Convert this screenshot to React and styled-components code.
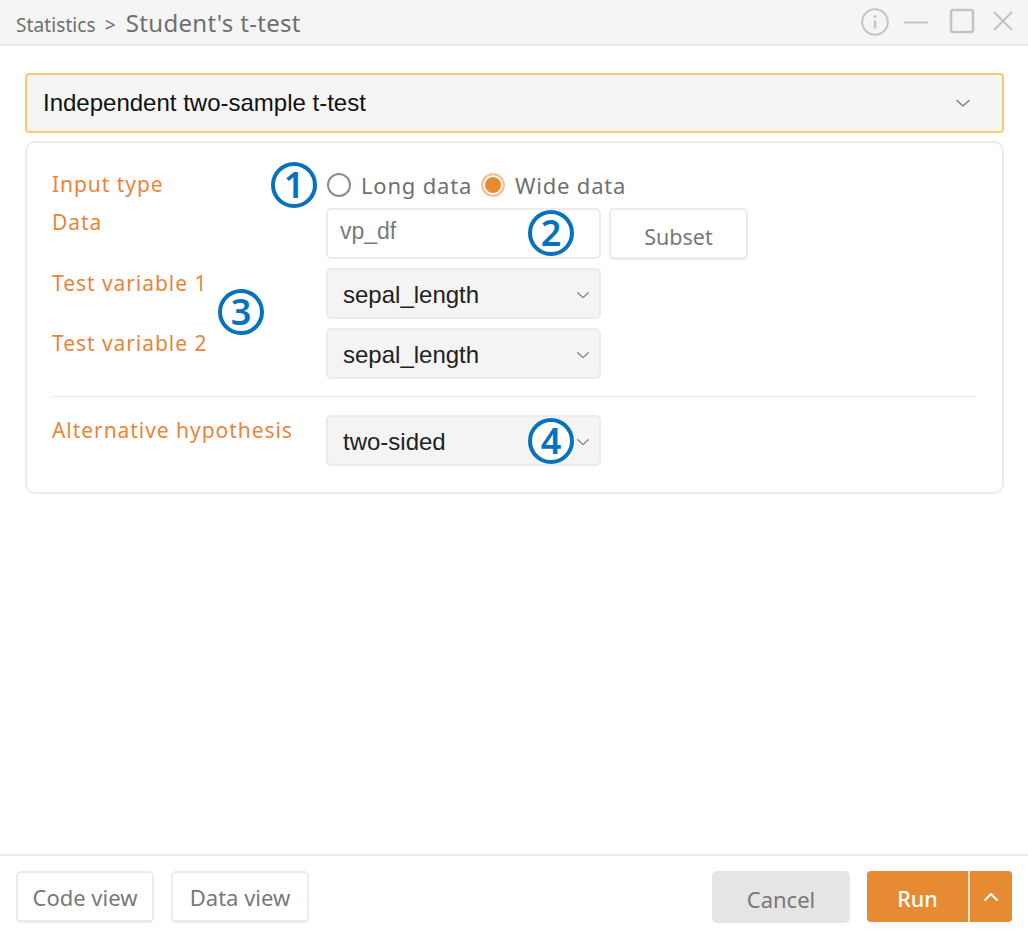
import React from 'react';
import styled, { createGlobalStyle } from 'styled-components';

const GlobalStyle = createGlobalStyle`
  html, body {
    margin: 0;
    padding: 0;
    background: #fff;
  }
  * {
    box-sizing: border-box;
  }
`;

const Window = styled.div`
  width: 1028px;
  height: 933px;
  display: flex;
  flex-direction: column;
  font-family: "Noto Sans", "Open Sans", sans-serif;
`;

const Header = styled.div`
  height: 46px;
  flex: none;
  display: flex;
  align-items: center;
  justify-content: space-between;
  padding: 0 14px 0 16px;
  background: #f5f5f5;
  border-bottom: 2px solid #e8e8e8;
`;

const Breadcrumb = styled.div`
  display: flex;
  align-items: baseline;
  color: #6f6f6f;
`;

const Crumb = styled.span`
  font-size: 19px;
  margin-right: 10px;
  letter-spacing: 0.1px;
  word-spacing: 4px;
`;

const Title = styled.span`
  font-size: 24px;
  letter-spacing: 0.3px;
`;

const WindowControls = styled.div`
  display: flex;
  align-items: center;
  color: #c4c4c4;
`;

const Main = styled.div`
  flex: 1;
  padding: 27px 24px 0 25px;
`;

const TestSelect = styled.div`
  height: 60px;
  display: flex;
  align-items: center;
  justify-content: space-between;
  padding: 0 31px 0 16px;
  background: #f5f5f5;
  border: 2px solid #f8ca74;
  border-radius: 4px;
  font-family: "Liberation Sans", Arial, sans-serif;
  font-size: 24px;
  color: #111;
`;

const Panel = styled.div`
  position: relative;
  height: 353px;
  margin-top: 8px;
  padding: 27px 26px 0 25px;
  border: 2px solid #ececec;
  border-radius: 10px;
`;

const Row = styled.div`
  display: grid;
  grid-template-columns: 274px 1fr;
  height: ${(p) => p.$height || 50}px;
  margin-bottom: ${(p) => p.$gap ?? 10}px;
`;

const Label = styled.div`
  color: #e8853a;
  font-size: 21px;
  line-height: 28px;
  letter-spacing: 0.95px;
  margin-top: ${(p) => p.$top ?? 0}px;
`;

const Controls = styled.div`
  display: flex;
  align-items: ${(p) => p.$align || 'stretch'};
`;

const RadioOption = styled.div`
  display: flex;
  align-items: center;
  color: #707070;
  font-size: 22px;
  letter-spacing: 0.8px;
  margin-right: 8px;
`;

const RadioDot = styled.span`
  width: 24px;
  height: 24px;
  margin: 0 10px 0 1px;
  border-radius: 50%;
  border: 2px solid ${(p) => (p.$checked ? '#f5c49c' : '#8c8c8c')};
  background: ${(p) => (p.$checked ? '#e68a33' : '#fff')};
  box-shadow: ${(p) => (p.$checked ? 'inset 0 0 0 2px #fff' : 'none')};
`;

const TextField = styled.div`
  width: 275px;
  height: 51px;
  display: flex;
  align-items: center;
  padding: 0 0 4px 12px;
  border: 2px solid #ececec;
  border-radius: 5px;
  color: #7a7a7a;
  font-family: "Liberation Sans", Arial, sans-serif;
  font-size: 23px;
`;

const SubsetButton = styled.div`
  width: 139px;
  height: 52px;
  margin-left: 8px;
  display: flex;
  align-items: center;
  justify-content: center;
  padding-top: 6px;
  border: 2px solid #ececec;
  border-bottom-width: 3px;
  border-radius: 5px;
  color: #787878;
  font-size: 21.5px;
`;

const SelectBox = styled.div`
  width: 275px;
  height: 51px;
  display: flex;
  align-items: center;
  justify-content: space-between;
  padding: 2px 9px 0 15px;
  background: #f4f4f4;
  border: 2px solid #ebebeb;
  border-radius: 5px;
  color: #222;
  font-family: "Liberation Sans", Arial, sans-serif;
  font-size: 24px;
`;

const Divider = styled.div`
  height: 1px;
  background: #e8e8e8;
  margin: 0 0 18px 0;
`;

const Callout = styled.span`
  position: absolute;
  left: ${(p) => p.$x}px;
  top: ${(p) => p.$y}px;
  width: 46px;
  height: 46px;
  display: flex;
  align-items: center;
  justify-content: center;
  padding-bottom: 1px;
  background: #fff;
  border: 4.5px solid #0672bf;
  border-radius: 50%;
  color: #0672bf;
  font-family: "Noto Sans", sans-serif;
  font-size: 36px;
  font-weight: 600;
  line-height: 1;
`;

const Footer = styled.div`
  height: 79px;
  flex: none;
  display: flex;
  justify-content: space-between;
  padding: 15px 16px 0 16px;
  border-top: 2px solid #ececec;
`;

const ButtonGroup = styled.div`
  display: flex;
  gap: ${(p) => p.$gap || 0}px;
`;

const ViewButton = styled.div`
  width: ${(p) => p.$width}px;
  height: 52px;
  display: flex;
  align-items: center;
  justify-content: center;
  border: 2px solid #ececec;
  border-bottom-width: 3px;
  border-radius: 5px;
  color: #787878;
  font-size: 22px;
`;

const CancelButton = styled.div`
  width: 138px;
  height: 52px;
  display: flex;
  align-items: center;
  justify-content: center;
  padding-top: 3px;
  background: #e5e5e5;
  border-radius: 5px;
  color: #787878;
  font-size: 22px;
`;

const RunButton = styled.div`
  width: 145px;
  height: 51px;
  display: flex;
  color: #fff;
  background: #e68a33;
  border-radius: 4px;
  overflow: hidden;
`;

const RunLabel = styled.div`
  width: 103px;
  display: flex;
  align-items: center;
  justify-content: center;
  padding-top: 3px;
  font-size: 21.5px;
  font-weight: 500;
  border-right: 2px solid #fbe9d8;
`;

const RunMore = styled.div`
  flex: 1;
  display: flex;
  align-items: center;
  justify-content: center;
`;

const Chevron = ({ size = 16, width = 1.5, color = '#808080', up = false }) => (
  <svg width={size} height={size} viewBox="0 0 16 16" fill="none">
    <path
      d={up ? 'M2 11 L8 5 L14 11' : 'M2 5.5 L8 11 L14 5.5'}
      stroke={color}
      strokeWidth={width}
      strokeLinecap="round"
      strokeLinejoin="round"
    />
  </svg>
);

const InfoIcon = () => (
  <svg width="30" height="30" viewBox="0 0 30 30" fill="none">
    <circle cx="15" cy="15" r="12.8" stroke="#c4c4c4" strokeWidth="2" />
    <circle cx="15" cy="9.5" r="1.5" fill="#c4c4c4" />
    <path d="M15 13.5 V21.5" stroke="#c4c4c4" strokeWidth="2.4" />
  </svg>
);

const MinimizeIcon = () => (
  <svg width="26" height="30" viewBox="0 0 26 30" fill="none" style={{ marginLeft: 13 }}>
    <path d="M1 15.5 H25" stroke="#c4c4c4" strokeWidth="2" />
  </svg>
);

const MaximizeIcon = () => (
  <svg width="26" height="28" viewBox="0 0 26 28" fill="none" style={{ marginLeft: 20 }}>
    <rect x="2" y="2" width="22" height="22" rx="2" stroke="#c4c4c4" strokeWidth="2.6" />
  </svg>
);

const CloseIcon = () => (
  <svg width="22" height="26" viewBox="0 0 22 26" fill="none" style={{ marginLeft: 17 }}>
    <path d="M2 3 L20 21 M20 3 L2 21" stroke="#c4c4c4" strokeWidth="2.2" />
  </svg>
);

const App = () => (
  <>
    <GlobalStyle />
    <Window>
      <Header>
        <Breadcrumb>
          <Crumb>Statistics &gt;</Crumb>
          <Title>Student's t-test</Title>
        </Breadcrumb>
        <WindowControls>
          <InfoIcon />
          <MinimizeIcon />
          <MaximizeIcon />
          <CloseIcon />
        </WindowControls>
      </Header>
      <Main>
        <TestSelect>
          Independent two-sample t-test
          <Chevron />
        </TestSelect>
        <Panel>
          <Row $height={28} $gap={10}>
            <Label>Input type</Label>
            <Controls $align="center">
              <RadioOption>
                <RadioDot />
                Long data
              </RadioOption>
              <RadioOption>
                <RadioDot $checked />
                Wide data
              </RadioOption>
            </Controls>
          </Row>
          <Row $height={50} $gap={10}>
            <Label>Data</Label>
            <Controls>
              <TextField>vp_df</TextField>
              <SubsetButton>Subset</SubsetButton>
            </Controls>
          </Row>
          <Row $height={50} $gap={10}>
            <Label $top={1}>Test variable 1</Label>
            <SelectBox>
              sepal_length
              <Chevron size={14} />
            </SelectBox>
          </Row>
          <Row $height={50} $gap={18}>
            <Label $top={1}>Test variable 2</Label>
            <SelectBox>
              sepal_length
              <Chevron size={14} />
            </SelectBox>
          </Row>
          <Divider />
          <Row $height={50} $gap={0}>
            <Label $top={1}>Alternative hypothesis</Label>
            <SelectBox>
              two-sided
              <Chevron size={14} />
            </SelectBox>
          </Row>
          <Callout $x={244} $y={19}>1</Callout>
          <Callout $x={501} $y={67}>2</Callout>
          <Callout $x={191} $y={146}>3</Callout>
          <Callout $x={501} $y={275}>4</Callout>
        </Panel>
      </Main>
      <Footer>
        <ButtonGroup $gap={17}>
          <ViewButton $width={138}>Code view</ViewButton>
          <ViewButton $width={138}>Data view</ViewButton>
        </ButtonGroup>
        <ButtonGroup $gap={17}>
          <CancelButton>Cancel</CancelButton>
          <RunButton>
            <RunLabel>Run</RunLabel>
            <RunMore>
              <Chevron color="#fff" width={2} up />
            </RunMore>
          </RunButton>
        </ButtonGroup>
      </Footer>
    </Window>
  </>
);

export default App;
